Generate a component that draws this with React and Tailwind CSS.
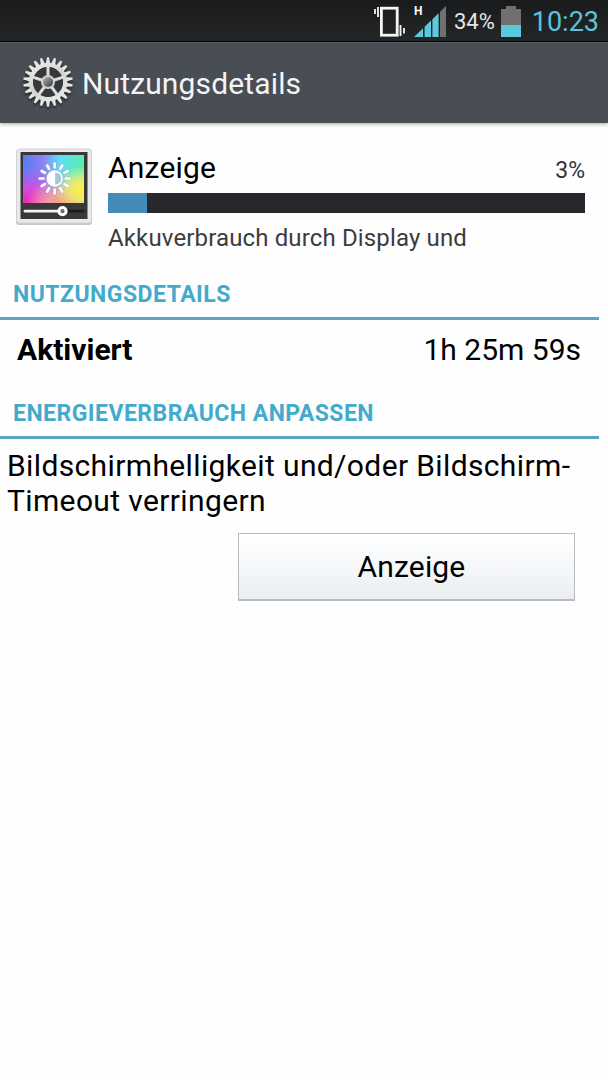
import React from "react";

// --- Status Bar Icons ---
const VibrateIcon = () => (
  <svg className="absolute left-[373px] top-[5px] h-8 w-8" viewBox="0 0 32 32" fill="none" stroke="#f4f4f4">
    <rect x="8.4" y="3.2" width="15.8" height="27" strokeWidth="2.8" />
    <path d="M2 4v5M5 2v10M27.5 20v11M31 23v5.5" strokeWidth="1.8" />
  </svg>
);

const SignalIcon = () => (
  <svg className="absolute left-[414px] top-[5px] h-8 w-8" viewBox="0 0 32 32">
    <path d="M0 32L9 23.3V32z" fill="#5cc8dc" />
    <path d="M10.6 21.8L17 15.6V32H10.6z" fill="#5cc8dc" />
    <path d="M18.4 14.2L24.6 8.2V32H18.4z" fill="#5cc8dc" />
    <path d="M26 6.8L32 1V32H26z" fill="#707070" />
  </svg>
);

const BatteryIcon = () => (
  <svg className="absolute left-[501px] top-[5px] h-8 w-5" viewBox="0 0 20 32">
    <path d="M5 1h10v3h5v16H0V4h5z" fill="#707070" />
    <rect y="20" width="20" height="12" fill="#5cc8dc" />
  </svg>
);

// --- Settings Gear ---
const GearIcon = () => {
  const teeth = Array.from({ length: 22 }, (_, i) => (i * 360) / 22);
  const spokes = [0, 72, 144, 216, 288];

  return (
    <svg className="mb-[3px] h-[54px] w-[54px] drop-shadow-[0_2px_1px_rgba(0,0,0,0.5)]" viewBox="-27 -27 54 54">
      <defs>
        <linearGradient id="metal" gradientUnits="userSpaceOnUse" x1="-16" y1="-24" x2="14" y2="24">
          <stop offset="0" stopColor="#f2f2ef" />
          <stop offset="0.5" stopColor="#d2d2cf" />
          <stop offset="1" stopColor="#f0f0ee" />
        </linearGradient>
        <linearGradient id="hub" x1="0" y1="0" x2="1" y2="1">
          <stop offset="0" stopColor="#b5b5b5" />
          <stop offset="1" stopColor="#333538" />
        </linearGradient>
      </defs>
      {teeth.map((angle) => (
        <path key={angle} d="M-2.2 -18L-1 -24.8H1L2.2 -18z" fill="url(#metal)" transform={`rotate(${angle})`} />
      ))}
      <circle r="17" fill="none" stroke="url(#metal)" strokeWidth="4.6" />
      <circle r="15" fill="#35383d" />
      {spokes.map((angle) => (
        <path key={angle} d="M0 -5V-16" stroke="#dededb" strokeWidth="3" transform={`rotate(${angle})`} />
      ))}
      <circle r="7" fill="#d0d0cd" />
      <circle r="5" fill="url(#hub)" />
    </svg>
  );
};

// --- Display Icon ---
const DisplayIcon = () => {
  const rays = Array.from({ length: 12 }, (_, i) => i * 30);

  return (
    <svg className="h-20 w-20 shrink-0" viewBox="0 0 80 80">
      <defs>
        <linearGradient id="hue" x1="0" y1="0" x2="1" y2="0">
          <stop offset="0" stopColor="#567df0" />
          <stop offset="0.3" stopColor="#8c7cf4" />
          <stop offset="0.6" stopColor="#63dcf5" />
          <stop offset="1" stopColor="#58f0a8" />
        </linearGradient>
        <radialGradient id="pink" cx="0.08" cy="0.98" r="0.75">
          <stop offset="0" stopColor="#ee28b4" />
          <stop offset="0.4" stopColor="#dc48dc" stopOpacity="0.9" />
          <stop offset="1" stopColor="#b060f0" stopOpacity="0" />
        </radialGradient>
        <radialGradient id="orange" cx="0.72" cy="1.08" r="0.68">
          <stop offset="0" stopColor="#ff9a70" />
          <stop offset="0.5" stopColor="#ffa996" stopOpacity="0.8" />
          <stop offset="1" stopColor="#ffc0a0" stopOpacity="0" />
        </radialGradient>
        <radialGradient id="yellow" cx="1" cy="0.72" r="0.5">
          <stop offset="0" stopColor="#fff040" />
          <stop offset="0.4" stopColor="#f4f060" stopOpacity="0.85" />
          <stop offset="1" stopColor="#e8f880" stopOpacity="0" />
        </radialGradient>
      </defs>
      <rect x="2" y="3" width="76" height="75" rx="3" fill="#c6c6c6" />
      <rect x="2.5" y="2" width="75" height="74" rx="3" fill="#e9e9e9" stroke="#d2d2d2" />
      <rect x="6.5" y="5" width="67" height="67" fill="#38383b" />
      <rect x="9" y="8" width="61" height="48" fill="url(#hue)" />
      <rect x="9" y="8" width="61" height="48" fill="url(#pink)" />
      <rect x="9" y="8" width="61" height="48" fill="url(#orange)" />
      <rect x="9" y="8" width="61" height="48" fill="url(#yellow)" />
      <g transform="translate(40.7 31.5)">
        {rays.map((angle) => (
          <path key={angle} d="M0 -11.2V-15" stroke="#7f8fb8" strokeOpacity="0.35" strokeWidth="4.2" strokeLinecap="round" transform={`rotate(${angle})`} />
        ))}
        {rays.map((angle) => (
          <path key={angle} d="M0 -11.2V-15" stroke="#fff" strokeWidth="2.7" strokeLinecap="round" transform={`rotate(${angle})`} />
        ))}
        <circle r="8.4" fill="#fff" stroke="#7f8fb8" strokeOpacity="0.35" />
        <path d="M0.5 -6A6 6 0 0 1 0.5 6z" fill="#9cc8d8" />
      </g>
      <path d="M11 64.2H49" stroke="#f2f2f2" strokeWidth="2.8" strokeLinecap="round" />
      <path d="M49 64.2H69" stroke="#1b1b1d" strokeWidth="2.8" strokeLinecap="round" />
      <circle cx="48.5" cy="64.2" r="3.6" fill="#6a6a6e" stroke="#fff" strokeWidth="3" />
    </svg>
  );
};

// --- Section Header ---
const SectionHeader = ({ title }) => (
  <div className="mr-[9px] flex h-[45px] items-start border-b-[3px] border-[#58a6c0] pl-[13px] pt-px">
    <h2 className="whitespace-nowrap text-[23px] leading-[38px] font-bold tracking-[0.47px] text-[#42abcd]">{title}</h2>
  </div>
);

const App = () => {
  return (
    <div className="h-[1080px] w-[608px] overflow-hidden bg-[#fefefe] font-['Roboto',sans-serif] text-black">
      {/* Status bar */}
      <div className="relative flex h-[42px] items-center justify-end border-b border-black bg-linear-to-b from-[#191a1b] to-[#252627] pr-[9px]">
        <VibrateIcon />
        <span className="absolute left-[414px] top-[5px] text-[12px] leading-3 font-bold text-white">H</span>
        <SignalIcon />
        <span className="mr-[37px] mt-[2px] text-[22px] leading-8 text-[#e6e6e6]">34%</span>
        <BatteryIcon />
        <span className="mt-[2px] text-[27px] leading-8 text-[#5cc3d8]">10:23</span>
      </div>

      {/* Action bar */}
      <header className="relative flex h-[81px] items-center border-t border-[#5c5e62] bg-[#494d54] pl-[21px] shadow-[0_1px_4px_rgba(0,0,0,0.35)]">
        <GearIcon />
        <h1 className="ml-[7px] mt-[2px] text-[30px] leading-9 tracking-[0.14px] text-[#f3f4f6]">Nutzungsdetails</h1>
      </header>

      {/* Usage summary */}
      <div className="flex h-[152px] pl-[14px] pr-[23px] pt-[24px]">
        <DisplayIcon />
        <div className="ml-[14px] flex-1">
          <div className="flex h-[46px] items-start justify-between pt-[3px]">
            <span className="text-[30px] leading-9 tracking-[0.2px]">Anzeige</span>
            <span className="mt-[5px] text-[23px] leading-8 text-[#333]">3%</span>
          </div>
          <div className="h-5 bg-[#28272c]">
            <div className="h-full w-[39px] bg-[#438cb8]" />
          </div>
          <p className="mt-[9px] whitespace-nowrap text-[24px] leading-8 tracking-[0.14px] text-[#3c3c3c]">Akkuverbrauch durch Display und</p>
        </div>
      </div>

      <SectionHeader title="NUTZUNGSDETAILS" />
      <div className="flex h-[74px] items-start justify-between pl-[17px] pr-[27px] pt-[12px] text-[30px] leading-9">
        <span className="font-bold">Aktiviert</span>
        <span>1h 25m 59s</span>
      </div>

      <SectionHeader title="ENERGIEVERBRAUCH ANPASSEN" />
      <p className="whitespace-nowrap pl-[7px] pt-[9px] text-[30px] leading-[35px] tracking-[0.37px]">
        Bildschirmhelligkeit und/oder Bildschirm-
        <br />
        Timeout verringern
      </p>
      <button className="ml-[238px] mt-[15px] block h-[68px] w-[337px] border border-b-2 border-[#b9bbbe] bg-linear-to-b from-white via-[#f5f7f9] to-[#ebeef1] pl-[10px] text-[30px] leading-9 tracking-[0.15px]">
        Anzeige
      </button>
    </div>
  );
};

export default App;
